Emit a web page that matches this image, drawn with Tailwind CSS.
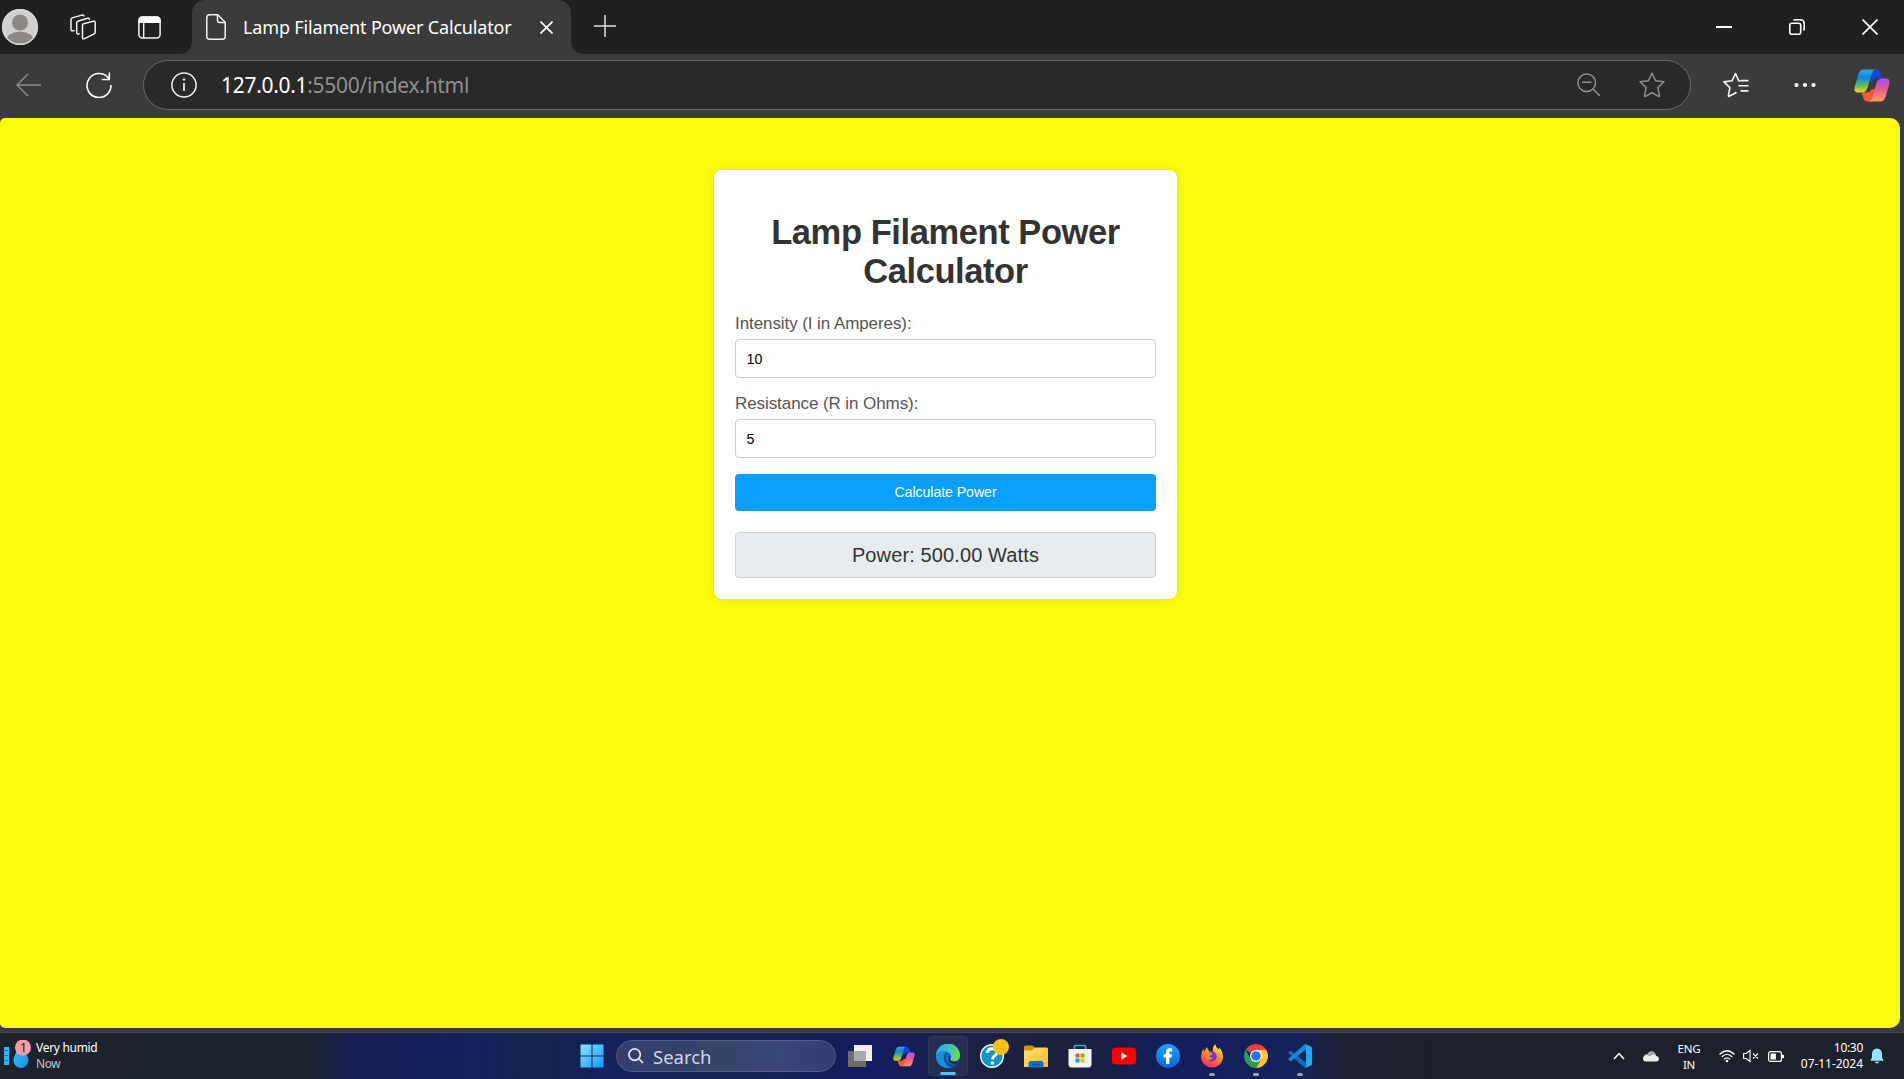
<!DOCTYPE html>
<html lang="en">
<head>
<meta charset="utf-8">
<title>Lamp Filament Power Calculator</title>
<script src="https://cdn.jsdelivr.net/npm/@tailwindcss/browser@4"></script>
</head>
<body class="flex h-[1079px] w-[1904px] flex-col overflow-hidden bg-[#3b3b3b] font-['Noto_Sans',sans-serif] text-white">

<svg class="absolute h-0 w-0" aria-hidden="true">
  <defs>
    <linearGradient id="cpA" x1="0" y1="0" x2="0" y2="1"><stop offset="0" stop-color="#2aa9f5"/><stop offset=".35" stop-color="#1483d8"/><stop offset=".65" stop-color="#4dba6e"/><stop offset="1" stop-color="#f5cf10"/></linearGradient>
    <linearGradient id="cpB" x1="0" y1="0" x2="0" y2="1"><stop offset="0" stop-color="#a44ff0"/><stop offset=".5" stop-color="#ee5691"/><stop offset="1" stop-color="#fda060"/></linearGradient>
    <symbol id="copilot" viewBox="0 0 36 33">
      <path d="M19 .5h3.500q3 0 4 3l1.800 6h-5q-3.500 0-4.700 3L15 13z" fill="#1346c8"/>
      <path d="M17 32.500h-3.500q-3 0-4-3L7.700 23.500h5q3.500 0 4.700-3l3.600-.5z" fill="#f4583a"/>
      <path d="M9.500.5H21q-2.300.6-3.200 4L13.500 19q-1.300 4.500-6 4.500H4.500q-5.300 0-3.800-5.500L4.500 5Q6 .5 9.500.5z" fill="url(#cpA)"/>
      <path d="M26.500 32.500H15q2.300-.6 3.200-4L22.500 14q1.300-4.500 6-4.500h3q5.300 0 3.800 5.500L31.500 28q-1.500 4.500-5 4.500z" fill="url(#cpB)"/>
    </symbol>
    <linearGradient id="win" x1="0" y1="0" x2="1" y2="1"><stop offset="0" stop-color="#8be3ff"/><stop offset="1" stop-color="#0a9bff"/></linearGradient>
    <linearGradient id="edgeG" x1="0" y1="0" x2="1" y2=".3"><stop offset="0" stop-color="#2aa6e0"/><stop offset=".55" stop-color="#35c1c8"/><stop offset="1" stop-color="#62dc5c"/></linearGradient>
    <linearGradient id="fold" x1="0" y1="0" x2="1" y2="1"><stop offset="0" stop-color="#ffe07a"/><stop offset="1" stop-color="#fbb91e"/></linearGradient>
    <linearGradient id="ffx" x1=".8" y1="0" x2=".3" y2="1"><stop offset="0" stop-color="#fff04a"/><stop offset=".45" stop-color="#ff9025"/><stop offset="1" stop-color="#f5246a"/></linearGradient>
    <linearGradient id="fbk" x1="0" y1="0" x2="0" y2="1"><stop offset="0" stop-color="#1aa4f8"/><stop offset="1" stop-color="#0768e0"/></linearGradient>
    <linearGradient id="drop" x1="0" y1="0" x2="1" y2="1"><stop offset="0" stop-color="#3cc4f6"/><stop offset="1" stop-color="#1390dd"/></linearGradient>
  </defs>
</svg>

<!-- Tab strip -->
<header class="flex h-[54px] shrink-0 bg-[#202020]">
  <div class="flex w-[192px] items-center rounded-br-[14px] pl-[2px]">
    <svg class="h-9 w-9 shrink-0" viewBox="0 0 36 36"><clipPath id="av"><circle cx="18" cy="18" r="17"/></clipPath><circle cx="18" cy="18" r="18" fill="#d2d0ce"/><g clip-path="url(#av)" fill="#8a8785"><circle cx="18" cy="13.500" r="8"/><ellipse cx="18" cy="32" rx="14" ry="9.500"/></g><circle cx="18" cy="18" r="17.300" fill="none" stroke="#d8d6d4" stroke-width="1.400"/></svg>
    <svg class="ml-8 h-[26px] w-[26px] shrink-0" viewBox="0 0 26 26" fill="none" stroke="#f2f2f2" stroke-width="1.500" stroke-linejoin="round" stroke-linecap="round"><path d="M12.500 11.300q0-1.200 1-1.600L23.300 7.200q1.900-.4 1.900 1.300v9.700q0 1.100-1 1.600l-9.600 4.800q-2.100.9-2.100-1.200z"/><path d="M9.200 19.800q-2.500.8-2.500-1.200V9q0-1.300 1.200-1.700l9.500-3q1.600-.4 2.100.9"/><path d="M4 16.600q-3 .8-3-1.200V5.700q0-1.400 1.200-1.800l9.600-2.800q1.500-.4 2.100.8"/></svg>
    <svg class="ml-[42px] h-[23px] w-[23px] shrink-0" viewBox="0 0 23 23"><rect x=".9" y=".9" width="21.200" height="21.200" rx="3.500" fill="none" stroke="#f4f4f4" stroke-width="1.500"/><path d="M.5 7V4Q.5.500 4 .5h15q3.500 0 3.500 3.500v3z" fill="#fff"/><path d="M5.700 7v15" stroke="#f4f4f4" stroke-width="1.400"/></svg>
  </div>
  <!-- active tab with flared bottom corners -->
  <div class="relative flex w-[379px] items-center rounded-t-[13px] bg-[#3b3b3b] pl-[14px]">
    <svg class="absolute bottom-0 left-[-14px] h-[14px] w-[14px]" viewBox="0 0 14 14"><path d="M14 0v14H0Q14 14 14 0z" fill="#3b3b3b"/></svg>
    <svg class="absolute right-[-14px] bottom-0 h-[14px] w-[14px]" viewBox="0 0 14 14"><path d="M0 0v14h14Q0 14 0 0z" fill="#3b3b3b"/></svg>
    <svg class="h-[26px] w-5 shrink-0" viewBox="0 0 20 26" fill="none" stroke="#f2f2f2" stroke-width="1.500" stroke-linejoin="round"><path d="M3.500.8h8.200L19.200 8.300V22.500q0 2.700-2.700 2.700h-13Q.8 25.200.8 22.500v-19Q.8.800 3.500.8z"/><path d="M11.500 1v5.500q0 2 2 2H19"/></svg>
    <span class="ml-[17px] w-[297px] whitespace-nowrap pb-px text-[18px] leading-6 tracking-[-0.16px]">Lamp Filament Power Calculator</span>
    <svg class="h-[13px] w-[13px] shrink-0" viewBox="0 0 13 13" stroke="#fff" stroke-width="1.600"><path d="M.5.500l12 12M12.500.500l-12 12"/></svg>
  </div>
  <svg class="mt-[15px] ml-[23px] h-[22px] w-[22px]" viewBox="0 0 22 22" stroke="#ddd" stroke-width="1.500"><path d="M0 11h22M11 0v22"/></svg>
  <div class="ml-auto flex items-center pr-[26px]">
    <svg class="h-4 w-4" viewBox="0 0 16 16"><path d="M0 8h16" stroke="#fff" stroke-width="2"/></svg>
    <svg class="ml-[57px] h-4 w-4" viewBox="0 0 16 16" fill="none" stroke="#fff" stroke-width="1.600"><rect x=".8" y="4.300" width="10.900" height="10.900" rx="2"/><path d="M4.500 1.300Q5.300.8 6.500.8H11q4.200 0 4.200 4.200v4.500q0 1.200-.7 2"/></svg>
    <svg class="ml-[57px] h-4 w-4" viewBox="0 0 16 16" stroke="#fff" stroke-width="1.700"><path d="M.5.500l15 15M15.500.500l-15 15"/></svg>
  </div>
</header>

<!-- Toolbar -->
<nav class="flex h-16 shrink-0 items-center bg-[#3b3b3b] pb-[2px] pl-[16px]">
  <svg class="h-[22px] w-[25px]" viewBox="0 0 25 22" fill="none" stroke="#8b8b8b" stroke-width="1.500"><path d="M12 0L1 11l11 11M1 11h24"/></svg>
  <svg class="ml-[45px] h-[26px] w-[26px]" viewBox="0 0 26 26" fill="none" stroke="#fff" stroke-width="1.600"><path d="M23.300 7.300A12 12 0 1 0 25 13"/><path d="M23.300.5v7h-7.500"/></svg>
  <div class="ml-[31px] flex h-[50px] w-[1548px] items-center rounded-full border border-[#6a6a6a] bg-[#292929] pl-[27px]">
    <svg class="h-[26px] w-[26px]" viewBox="0 0 26 26"><circle cx="13" cy="13" r="12.100" fill="none" stroke="#f2f2f2" stroke-width="1.500"/><path d="M13 11v8" stroke="#f2f2f2" stroke-width="1.700"/><circle cx="13" cy="7.600" r="1.200" fill="#f2f2f2"/></svg>
    <span class="ml-6 whitespace-nowrap text-[21px] leading-7 tracking-[-0.3px] text-[#8f8f8f]"><span class="text-white">127.0.0.1</span>:5500/index.html</span>
    <svg class="ml-auto h-6 w-6" viewBox="0 0 24 24" fill="none" stroke="#929292" stroke-width="1.500"><circle cx="9.700" cy="9.700" r="8.800"/><path d="M5 9.300h9.500M16 16l7 7"/></svg>
    <svg class="mr-[25px] ml-[38px] h-[26px] w-[26px]" viewBox="0 0 26 26" fill="none" stroke="#929292" stroke-width="1.500" stroke-linejoin="round"><path d="M13 1.200l3.600 7.500 8.300 1.100-6 5.700 1.500 8.200q.1 1-.9.700L13 20.600l-6.500 3.800q-1 .3-.9-.7l1.500-8.200-6-5.700 8.300-1.100z"/></svg>
  </div>
  <svg class="ml-8 h-[26px] w-[26px]" viewBox="0 0 26 26" fill="none" stroke="#f4f4f4" stroke-width="1.600" stroke-linejoin="round"><path d="M17.300 9.200l-1.500-.4L12.500 1.500 9 8.800.9 9.900l6 5.700-1.500 8q0 1 .8.700L12 21.200l1.500-.9M17.500 8.600H25.500M15.500 13.800h10M17.500 18.900h8"/></svg>
  <svg class="ml-[45px] h-[6px] w-[22px]" viewBox="0 0 22 6" fill="#fff"><circle cx="2.500" cy="3" r="2.100"/><circle cx="11" cy="3" r="2.100"/><circle cx="19.500" cy="3" r="2.100"/></svg>
  <svg class="ml-[38px] h-[33px] w-9"><use href="#copilot"/></svg>
</nav>

<!-- Page viewport -->
<main class="flex h-[910px] w-[1900px] shrink-0 justify-center rounded-[10px] rounded-tl-[5px] rounded-bl-[5px] bg-[#fcfc0a] pt-[52px] pr-[9px] font-['Liberation_Sans',Arial,sans-serif]">
  <form class="flex h-[429px] w-[463px] flex-col rounded-lg bg-white px-[21px] pt-[43px] shadow-[0_0_11px_rgba(0,0,0,0.1)]">
    <h1 class="text-center text-[34.5px] leading-[39px] font-bold tracking-[-0.42px] text-[#333]">Lamp Filament Power Calculator</h1>
    <label class="mt-[23px] h-[25px] text-[17px] leading-5 tracking-[-0.08px] text-[#555]" for="i">Intensity (I in Amperes):</label>
    <input id="i" value="10" class="h-[39px] rounded border border-[#ccc] bg-white px-[10.500px] text-[14.200px] text-black">
    <label class="mt-4 h-[25px] text-[17px] leading-5 tracking-[-0.08px] text-[#555]" for="r">Resistance (R in Ohms):</label>
    <input id="r" value="5" class="h-[39px] rounded border border-[#ccc] bg-white px-[10.500px] text-[14.200px] text-black">
    <button type="button" class="mt-4 h-[37px] rounded bg-[#089fff] pt-px text-[14.200px] tracking-[-0.08px] text-white">Calculate Power</button>
    <div class="mt-[21px] flex h-[46px] items-center justify-center rounded border border-[#ced2d6] bg-[#e8ecef] text-[20px] tracking-[0.12px] text-[#333]">Power: 500.00 Watts</div>
  </form>
</main>

<!-- Taskbar -->
<footer class="mt-1 flex h-[47px] shrink-0 items-center border-t border-[#454a52] bg-[linear-gradient(90deg,#1d222d_0,#1c2230_310px,#141f52_355px,#12205c_480px,#12244a_530px,#14205a_600px,#14234f_740px,#131c60_870px,#1c2142_980px,#1b203c_1080px,#131e5c_1170px,#13225a_1290px,#1d2032_1345px,#1c212b_1500px,#1c212b_100%)]">
  <div class="flex w-[580px] items-center pl-[3px]">
    <svg class="h-[32px] w-[30px]" viewBox="0 0 30 32"><rect x="1" y="7" width="5" height="18" fill="#30b6ee"/><path d="M1.500 10.500H5M1.500 15.500H5M1.500 20.500H5" stroke="#126a9e"/><path d="M17.500 6q8 9 8 14.500a7.500 7.500 0 0 1-15 0Q10.500 15 17.500 6z" fill="url(#drop)"/><circle cx="20" cy="7.500" r="8" fill="#ff99a4"/><text x="20.500" y="11.800" text-anchor="middle" font-size="12" fill="#111">1</text></svg>
    <div class="ml-[3px] text-[12px] leading-4 tracking-[-0.3px]"><div>Very humid</div><div class="tracking-[-0.4px] text-[#bfc2c7]">Now</div></div>
  </div>
  <svg class="h-6 w-6" viewBox="0 0 24 24" fill="url(#win)"><path d="M.5 1q0-.5.5-.5h10.500v11H.5zM12.500.5H23q.5 0 .5.5v10.500h-11zM.5 12.500h11v11H1q-.5 0-.5-.5zM12.500 12.500h11V23q0 .5-.5.5H12.500z"/></svg>
  <div class="ml-3 flex h-8 w-[220px] items-center rounded-full border border-[#535f8c] bg-[linear-gradient(90deg,#363d70,#35446a_50%,#384578_75%,#353b75)] pl-[11px]">
    <svg class="h-4 w-4" viewBox="0 0 16 16" fill="none" stroke="#e4e6ee" stroke-width="1.700"><circle cx="6.600" cy="6.600" r="5.700"/><path d="M10.700 10.700L15 15"/></svg>
    <span class="ml-[9px] pt-[2px] text-[18.500px] leading-6 text-[#d2d6e2]">Search</span>
  </div>
  <div class="ml-1 flex items-center gap-1">
    <div class="grid h-10 w-10 place-items-center"><svg class="h-6 w-6" viewBox="0 0 24 24"><path d="M6 1h18v16H6z" fill="#f0f0f0"/><path d="M0 7h18v16H0z" fill="#6d6d6d"/><path d="M6 7h12v10H6z" fill="#aaa"/></svg></div>
    <div class="grid h-10 w-10 place-items-center"><svg class="h-[21px] w-[22px]"><use href="#copilot"/></svg></div>
    <div class="relative grid h-10 w-10 place-items-center rounded border border-[#343858] bg-[#272c50]">
      <svg class="h-6 w-6" viewBox="0 0 24 24"><circle cx="12" cy="12" r="12" fill="#1070c8"/><path d="M0 12A12 12 0 0 1 24 11q0 6-5.500 6-4.500 0-4.500-2 1.500-1.500.8-4Q13.500 7.300 8 7.500 2 8 0 12z" fill="url(#edgeG)"/><path d="M8 11q0-3 3.500-3.600Q3.500 5.500 0 12q-.2 7 6 10.500 4 2.200 8.500 1.200Q8 20 8 11z" fill="#128fdc"/><path d="M8.500 11q-2 5 2 9.500 5 5 11-1-4 2.200-8 .2Q9 17.300 9.300 13.300q.2-3 3.200-3.500-2.900-1.300-4 1.200z" fill="#0c4690"/><path d="M14.500 14.500q-.7 3 4 3 2.500 0 4.500-2-.5 2.500-2.500 4.500-3 1-6-1-3.500-2.500-1.500-7.500 2.300 1 1.500 3z" fill="#272c50"/></svg>
      <span class="absolute bottom-0 left-[11px] h-[3px] w-4 rounded-full bg-[#4cc2ff]"></span>
    </div>
    <div class="relative grid h-10 w-10 place-items-center">
      <svg class="h-6 w-6" viewBox="0 0 24 24"><circle cx="12" cy="12" r="11.300" fill="#0b93d4" stroke="#f4f8fa" stroke-width="1.400"/><path d="M7.500 9q0-4.200 4.700-4.200t4.500 3.700q0 2.200-2 3.400-2 1.100-2.200 3.400" fill="none" stroke="#fff" stroke-width="3"/><circle cx="12.300" cy="19" r="1.800" fill="#fff"/></svg>
      <span class="absolute top-[3px] right-[3px] h-4 w-4 rounded-full bg-[#ffc010]"></span>
    </div>
    <div class="grid h-10 w-10 place-items-center"><svg class="h-6 w-6" viewBox="0 0 24 24"><path d="M0 3q0-1.500 1.500-1.500h7L11 4 8 7H0z" fill="#d59310"/><path d="M0 6.500h8L10.800 3.500H22.500Q24 3.500 24 5v18H0z" fill="url(#fold)"/><path d="M4.500 23.500v-4q0-2.500 2.500-2.500h10q2.500 0 2.500 2.500v4z" fill="#1373c4"/><path d="M8 20.500h8" stroke="#0d5797" stroke-width="1.500"/></svg></div>
    <div class="grid h-10 w-10 place-items-center"><svg class="h-6 w-6" viewBox="0 0 24 24"><path d="M6.500 6V2.500q0-1 1-1h9q1 0 1 1V6" fill="none" stroke="#26b3ee" stroke-width="1.700"/><path d="M.5 5h23v15.500q0 3-3 3h-17q-3 0-3-3z" fill="#f3f3f3"/><path fill="#f25022" d="M7.500 9.500h4v4h-4z"/><path fill="#7fba00" d="M12.500 9.500h4v4h-4z"/><path fill="#00a4ef" d="M7.500 14.500h4v4h-4z"/><path fill="#ffb900" d="M12.500 14.500h4v4h-4z"/></svg></div>
    <div class="grid h-10 w-10 place-items-center"><svg class="h-6 w-6" viewBox="0 0 24 24"><rect y="3.500" width="24" height="17" rx="3.500" fill="#f00"/><path d="M9.300 8.300l6 3.700-6 3.700z" fill="#fff"/></svg></div>
    <div class="grid h-10 w-10 place-items-center"><svg class="h-6 w-6" viewBox="0 0 24 24"><circle cx="12" cy="12" r="12" fill="url(#fbk)"/><path d="M10 20v-6.500H7.500V10.300H10V8.500q0-4.200 4.200-4.200.9 0 2 .2v2.800h-1.300q-1.500 0-1.500 1.400v1.600h2.700l-.5 3.200h-2.200V20z" fill="#fff"/></svg></div>
    <div class="relative grid h-10 w-10 place-items-center"><svg class="h-6 w-6" viewBox="0 0 24 24"><path d="M1 13Q1 8 3.300 4.800l1 3L6.500 3l3 4.500h4Q11.500 4 15.300.3q.5 3 3.200 5 1-.3.800-1.800Q23 7.500 23 13a11 10.500 0 0 1-22 0z" fill="url(#ffx)"/><circle cx="11.800" cy="12.500" r="5" fill="#7636d8"/><path d="M4 8q3-1 7 1 2 .7 1.500 1.700-3 .3-3.500 2 1.500 1.300 4 .8-1.500 3-5 2Q4.500 14 4 8z" fill="#ff8a20"/></svg><span class="absolute bottom-0 left-[17px] h-[3px] w-[6px] rounded-full bg-[#a0a3b4]"></span></div>
    <div class="relative grid h-10 w-10 place-items-center"><svg class="h-6 w-6" viewBox="0 0 24 24"><path d="M12 12L1.610 6A12 12 0 0 1 22.390 6z" fill="#e8453c"/><path d="M12 12V6h10.390A12 12 0 0 1 12 24l5.200-9z" fill="#fdc52f"/><path d="M12 12l5.200 3L12 24A12 12 0 0 1 1.610 6L6.800 15z" fill="#2f9e4f"/><circle cx="12" cy="12" r="6" fill="#fff"/><circle cx="12" cy="12" r="4.800" fill="#2a77ea"/></svg><span class="absolute bottom-0 left-[17px] h-[3px] w-[6px] rounded-full bg-[#a0a3b4]"></span></div>
    <div class="relative grid h-10 w-10 place-items-center"><svg class="h-6 w-6" viewBox="0 0 24 24"><path d="M.5 8.500L2.200 7q.5-.4 1 0L18 18.500V24h-.7q-.6-.1-1-.5L.5 9.500q-.5-.5 0-1z" fill="#0a6fb5"/><path d="M.5 15.500L2.200 17q.5.400 1 0L18 5.500V0h-.7q-.6.1-1 .5L.5 14.500q-.5.500 0 1z" fill="#1589d1"/><path d="M17.300 24Q18 23.500 18 22V2q0-1.500-.7-2l5.700 2.600q1 .5 1 1.500v15.800q0 1-1 1.500z" fill="#2aa5f2"/></svg><span class="absolute bottom-0 left-[17px] h-[3px] w-[6px] rounded-full bg-[#a0a3b4]"></span></div>
  </div>
  <!-- system tray -->
  <div class="ml-auto flex items-center pr-5">
    <svg class="h-2 w-3" viewBox="0 0 12 8" fill="none" stroke="#fff" stroke-width="1.500"><path d="M1 7l5-5.500L11 7"/></svg>
    <svg class="ml-[18px] h-3 w-4" viewBox="0 0 16 12"><path d="M1 8q-.2-4 3.500-4.300Q6 .6 9.500 1.200 12.500 2 13 5l-6 5z" fill="#a4a6aa"/><path d="M0 8.500q0-3 3.500-3.200 1.500 0 3 1L10 4.500q2.500-.5 3.500 1.500Q16 6.500 16 8.800 16 11.500 13 11.500H3Q0 11.500 0 8.500z" fill="#eee"/></svg>
    <div class="ml-[18px] w-[24px] pt-px text-center text-[11.500px] leading-4 tracking-[-0.2px]">ENG<br>IN</div>
    <svg class="ml-[18px] h-4 w-4" viewBox="0 0 16 16" fill="none" stroke="#fff" stroke-width="1.200"><path d="M.5 6.500q7.500-7.500 15 0M2.700 9q5.300-5.500 10.600 0M5 11.300q3-3 6 0"/><circle cx="8" cy="13" r="1.300" fill="#fff" stroke="none"/></svg>
    <svg class="ml-2 h-[14px] w-4" viewBox="0 0 16 14" fill="none" stroke="#fff" stroke-width="1.100"><path d="M.6 4.500h2.500L7 1.300v11.400L3.100 9.500H.6zM10 4.500l5 5M15 4.500l-5 5"/></svg>
    <svg class="ml-[9px] h-[11px] w-4" viewBox="0 0 16 11"><rect x=".6" y=".6" width="12.800" height="9.800" rx="2" fill="none" stroke="#fff" stroke-width="1.200"/><path d="M2.500 2.500H8v6H2.500zM14 3.700h1q1 0 1 .8v2q0 .8-1 .8h-1z" fill="#fff"/></svg>
    <div class="ml-4 w-[63px] text-right text-[12px] leading-4 tracking-[-0.05px] whitespace-nowrap"><span class="tracking-[-0.3px]">10:30</span><br>07-11-2024</div>
    <svg class="ml-[7px] h-4 w-[14px]" viewBox="0 0 14 16" fill="#8fe6ff"><path d="M7 .5q4.800.3 5 5V9.500L13.500 12q.3.800-.5.800H1q-.8 0-.5-.8L2 9.500V5.500Q2.200.8 7 .5zM4.700 13.700h4.600Q8.700 15.500 7 15.500t-2.300-1.800z"/></svg>
  </div>
</footer>
</body>
</html>
